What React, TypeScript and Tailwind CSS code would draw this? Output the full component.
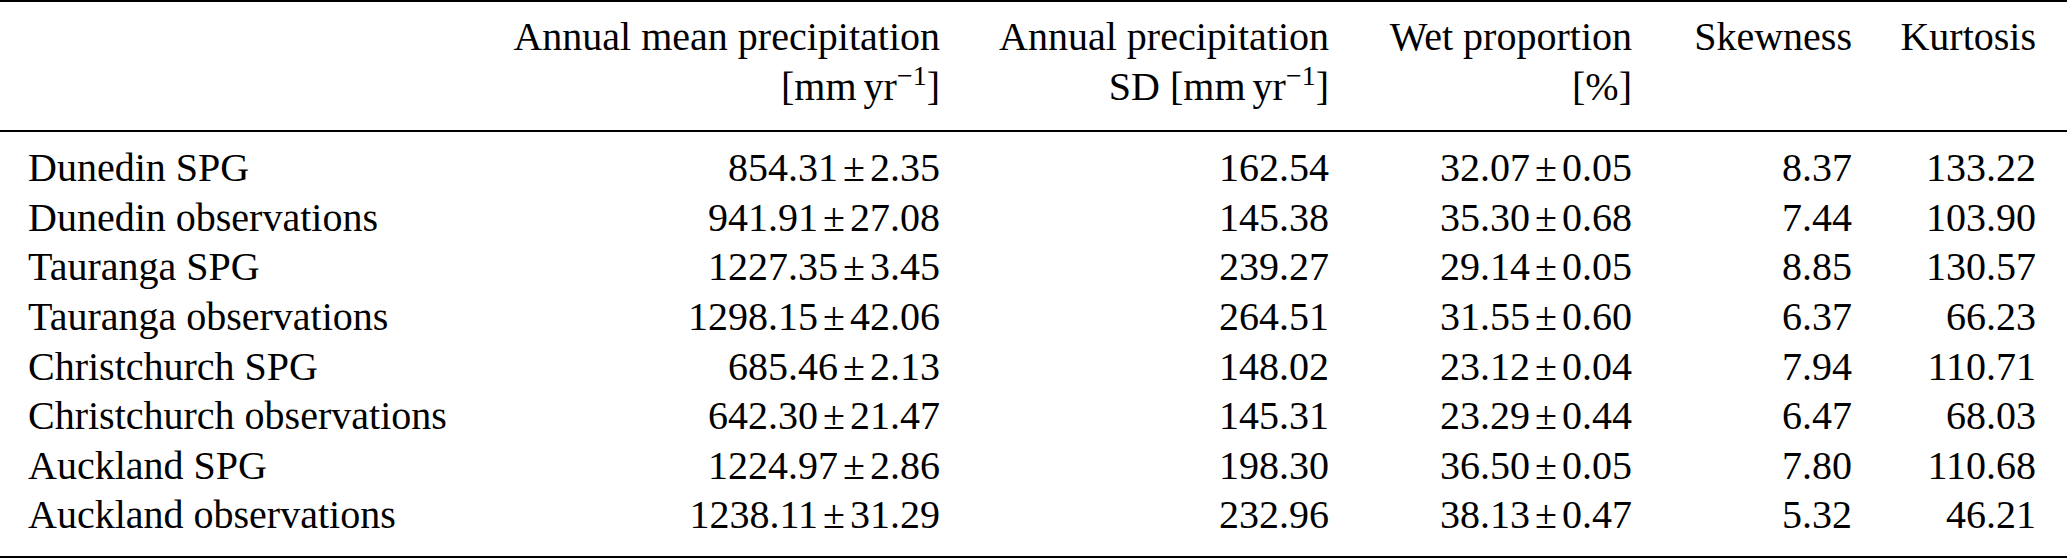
import React from 'react';

type Row = {
    name: string;
    mean: [string, string];
    sd: string;
    wet: [string, string];
    skew: string;
    kurt: string;
};

const rows: Row[] = [
    { name: 'Dunedin SPG', mean: ['854.31', '2.35'], sd: '162.54', wet: ['32.07', '0.05'], skew: '8.37', kurt: '133.22' },
    { name: 'Dunedin observations', mean: ['941.91', '27.08'], sd: '145.38', wet: ['35.30', '0.68'], skew: '7.44', kurt: '103.90' },
    { name: 'Tauranga SPG', mean: ['1227.35', '3.45'], sd: '239.27', wet: ['29.14', '0.05'], skew: '8.85', kurt: '130.57' },
    { name: 'Tauranga observations', mean: ['1298.15', '42.06'], sd: '264.51', wet: ['31.55', '0.60'], skew: '6.37', kurt: '66.23' },
    { name: 'Christchurch SPG', mean: ['685.46', '2.13'], sd: '148.02', wet: ['23.12', '0.04'], skew: '7.94', kurt: '110.71' },
    { name: 'Christchurch observations', mean: ['642.30', '21.47'], sd: '145.31', wet: ['23.29', '0.44'], skew: '6.47', kurt: '68.03' },
    { name: 'Auckland SPG', mean: ['1224.97', '2.86'], sd: '198.30', wet: ['36.50', '0.05'], skew: '7.80', kurt: '110.68' },
    { name: 'Auckland observations', mean: ['1238.11', '31.29'], sd: '232.96', wet: ['38.13', '0.47'], skew: '5.32', kurt: '46.21' },
];

const cols = 'grid grid-cols-[470px_442px_389px_303px_220px_184px]';

// value ± error, spaced like a math binary op
function PM({ v }: { v: [string, string] }) {
    return (
        <span>
            {v[0]}
            <span className="mx-[5px]">±</span>
            {v[1]}
        </span>
    );
}

function Unit() {
    return (
        <span>
            [mm<span className="ml-[7px]">yr</span>
            <span className="text-[28px] leading-none align-[15px]">−1</span>]
        </span>
    );
}

export default function App() {
    return (
        <div className="w-[2067px] h-[558px] bg-white text-black text-[40px] leading-[49.6px] font-['Liberation_Serif','Times_New_Roman',serif]">
            <div className="border-t-2 border-black" />

            {/* header */}
            <div className={`${cols} pl-[28px] pt-[10px] pb-[19px] text-right`}>
                <div />
                <div>
                    <div>Annual mean precipitation</div>
                    <div><Unit /></div>
                </div>
                <div>
                    <div>Annual precipitation</div>
                    <div>SD <Unit /></div>
                </div>
                <div>
                    <div>Wet proportion</div>
                    <div>[%]</div>
                </div>
                <div>Skewness</div>
                <div>Kurtosis</div>
            </div>

            <div className="border-t-2 border-black" />

            {/* body */}
            <div className="pl-[28px] pt-[11px] pb-[16px]">
                {rows.map(r => (
                    <div key={r.name} className={`${cols} text-right`}>
                        <div className="text-left">{r.name}</div>
                        <div><PM v={r.mean} /></div>
                        <div>{r.sd}</div>
                        <div><PM v={r.wet} /></div>
                        <div>{r.skew}</div>
                        <div>{r.kurt}</div>
                    </div>
                ))}
            </div>

            <div className="border-t-2 border-black" />
        </div>
    );
}
